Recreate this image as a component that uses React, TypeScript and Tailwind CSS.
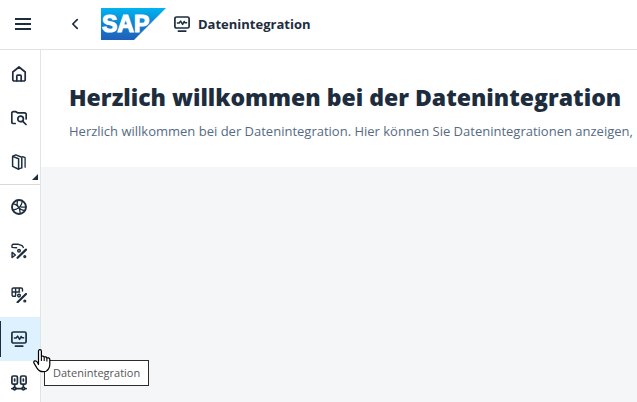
import type { ReactNode } from "react";
import clsx from "clsx";

interface IconProps {
    children: ReactNode;
}

function Icon({ children }: IconProps) {
    return (
        <svg
            className="w-4 h-4 shrink-0"
            viewBox="0 0 16 16"
            fill="none"
            stroke="currentColor"
            strokeWidth="1.7"
            strokeLinecap="round"
            strokeLinejoin="round"
            aria-hidden="true"
        >
            {children}
        </svg>
    );
}

const HomeIcon = () => (
    <Icon>
        <path d="M1.8 6 8 1l6.2 5v7.5a1.5 1.5 0 0 1-1.5 1.5H3.3a1.5 1.5 0 0 1-1.5-1.5z" />
        <path d="M5.8 15v-4.8a1 1 0 0 1 1-1h2.4a1 1 0 0 1 1 1V15" />
    </Icon>
);

const RepositoryIcon = () => (
    <Icon>
        <path d="M4.2 13.5H2.3A1.5 1.5 0 0 1 .8 12V3.2a1.5 1.5 0 0 1 1.5-1.5h2.6l1.6 1.1h7.2a1.5 1.5 0 0 1 1.5 1.5V9" />
        <circle cx="9.6" cy="8.9" r="2.8" />
        <path d="m11.6 11.1 3.4 3.4" />
    </Icon>
);

const CatalogIcon = () => (
    <Icon>
        <path d="M1.6 2.4 7.6 4.8v10.4l-6-2.8z" strokeWidth="1.5" />
        <path d="M1.8 2.2 4.8.9l6 2.4v10.6l-3 1" strokeWidth="1.5" />
        <path d="m11.6 2.6 2.5 1v9.6" strokeWidth="1.3" />
    </Icon>
);

const SemanticIcon = () => (
    <Icon>
        <circle cx="8" cy="8" r="7" strokeWidth="1.9" />
        <path d="M6.6 1.4C4.8 6.6 8 11 13.8 11.6M11.4 2.2C10.6 7.6 6.4 10.6 2 11M2.4 4.8c2 .2 4.4 1.6 6.2 5.2l.6 4.6M9.4 7.6c1.4.8 3.2.8 5.4.2" strokeWidth="1.3" />
    </Icon>
);

const DataBuilderIcon = () => (
    <Icon>
        <path d="M1 4.2V2.6c0-.8.5-1.3 1.3-1.3h5.2l3.6 1.3 1.2 1.8M1 4.4l4.6.4" strokeWidth="1.4" />
        <path d="M1.1 9.4 4.4 12l-3.3 2.5z" strokeWidth="1.5" />
        <path d="M15 6.6 6.6 14.8" strokeWidth="2.2" />
        <circle cx="8" cy="7.8" r="1.3" strokeWidth="1.5" />
        <circle cx="13.8" cy="13.6" r=".9" strokeWidth="1.4" />
    </Icon>
);

const BusinessBuilderIcon = () => (
    <Icon>
        <path d="M4.4 9.2H2.5C1.6 9.2 1.1 8.7 1.1 8V2.3c0-.8.5-1.3 1.4-1.3h7.7c.8 0 1.3.5 1.3 1.3v1.7M1.1 5h7.6M4.6 1v7.4M8.2 1v3" strokeWidth="1.4" />
        <path d="M15 7 6.6 15.2" strokeWidth="2.2" />
        <circle cx="8" cy="8.6" r="1.3" strokeWidth="1.5" />
        <circle cx="13.8" cy="14" r=".9" strokeWidth="1.4" />
    </Icon>
);

const IntegrationIcon = () => (
    <Icon>
        <rect x=".9" y="1" width="14.2" height="11" rx="1.6" />
        <path d="M4.4 15.1h7.4" />
        <path d="M3.4 7h1.8l1.4-1.9 2 3.3 1.5-2.9.9 1.3h1.6" strokeWidth="1.5" />
    </Icon>
);

const AccessIcon = () => (
    <Icon>
        <rect x=".9" y="1" width="5.5" height="8.2" rx="1.3" />
        <rect x="9.6" y="1" width="5.5" height="8.2" rx="1.3" />
        <path d="M3.65 4v2M12.35 4v2M3.65 9.8V12M12.35 9.8V12M.8 13.6h1.3M5.1 13.6h5.8M13.9 13.6h1.3" />
        <circle cx="3.65" cy="13.6" r="1.3" />
        <circle cx="12.35" cy="13.6" r="1.3" />
    </Icon>
);

function SapLogo() {
    return (
        <svg className="w-[65px] h-8" viewBox="0 0 65 32" role="img" aria-label="SAP">
            <defs>
                <linearGradient id="sap" x1="0" y1="0" x2="0" y2="1">
                    <stop offset="0" stopColor="#00b4f0" />
                    <stop offset=".5" stopColor="#0f83d2" />
                    <stop offset="1" stopColor="#2060b8" />
                </linearGradient>
            </defs>
            <path d="M0 0h65L33 32H0z" fill="url(#sap)" />
            <text
                x="1"
                y="24"
                fill="#fff"
                stroke="#fff"
                strokeWidth="1.2"
                fontFamily="Liberation Sans, sans-serif"
                fontWeight="700"
                fontSize="23"
            >
                SAP
            </text>
        </svg>
    );
}

function HandCursor() {
    return (
        <svg className="absolute left-[33px] top-8 z-20 w-[18px] h-6" viewBox="0 0 18 24" aria-hidden="true">
            <path
                d="M5.5 15.5V2.3C5.5 1.3 6 .7 6.9.7s1.5.6 1.5 1.6v5.2c.3-.7 2.6-.7 2.8.7.6-.6 2.5-.5 2.7.9.8-.6 2.9-.4 2.9 1.5v5.2c0 1.7-.5 2.8-1.2 3.9-1 1.9-2.7 3-5.4 3-3.2 0-4.8-1.4-6.2-3.6l-3-5c-.6-1-.1-1.9.7-2.2 1-.3 1.9.2 2.6 1.2z"
                fill="#fff"
                stroke="#000"
                strokeWidth="1.2"
                strokeLinejoin="round"
            />
            <path d="M8.4 7.5V12M11.2 8.2V12M13.9 9.3v3.2" stroke="#000" strokeWidth="1.1" fill="none" />
        </svg>
    );
}

interface NavItem {
    label: string;
    icon: ReactNode;
    active?: boolean;
    expandable?: boolean;
}

const mainItems: NavItem[] = [
    { label: "Startseite", icon: <HomeIcon /> },
    { label: "Repository-Explorer", icon: <RepositoryIcon /> },
    { label: "Katalog", icon: <CatalogIcon />, expandable: true },
];

const toolItems: NavItem[] = [
    { label: "Semantisches Onboarding", icon: <SemanticIcon /> },
    { label: "Data Builder", icon: <DataBuilderIcon /> },
    { label: "Business Builder", icon: <BusinessBuilderIcon /> },
    { label: "Datenintegration", icon: <IntegrationIcon />, active: true },
    { label: "Datenzugriffskontrollen", icon: <AccessIcon /> },
];

function NavList({ items }: { items: NavItem[] }) {
    return (
        <ul>
            {items.map((item) => (
                <li key={item.label} className="relative">
                    <button
                        type="button"
                        aria-label={item.label}
                        aria-current={item.active ? "page" : undefined}
                        className={clsx("flex h-11 w-full items-center justify-center pr-0.5", item.active && "bg-[#ddf1ff]")}
                    >
                        {item.icon}
                    </button>
                    {item.expandable && (
                        <svg className="absolute right-0.5 bottom-1 w-1.5 h-1.5" viewBox="0 0 6 6" aria-hidden="true">
                            <path d="M6 0v6H0z" fill="#1d2d3e" />
                        </svg>
                    )}
                    {item.active && (
                        <>
                            <span className="absolute left-0 top-1 bottom-1 w-px bg-[#1d2d3e]" />
                            <HandCursor />
                            <div
                                role="tooltip"
                                className="absolute left-11 top-[43px] z-10 border border-[#2b2b2b] bg-white px-2 py-1 font-['Open_Sans',sans-serif] text-[11px] leading-4 text-[#575757]"
                            >
                                {item.label}
                            </div>
                        </>
                    )}
                </li>
            ))}
        </ul>
    );
}

export default function App() {
    return (
        <div className="flex h-screen flex-col overflow-hidden bg-[#f5f6f7] font-['Open_Sans',sans-serif] text-[#1d2d3e]">
            <header className="flex h-[50px] shrink-0 items-center border-b border-[#e2e3e5] bg-white px-[15px] pb-px">
                <button type="button" aria-label="Menü" className="flex h-8 w-4 items-center">
                    <svg className="w-4 h-4" viewBox="0 0 16 16" aria-hidden="true">
                        <path d="M0 3h16M0 8h16M0 13h16" stroke="currentColor" strokeWidth="2" />
                    </svg>
                </button>
                <button type="button" aria-label="Zurück" className="ml-9 flex h-8 w-4 items-center">
                    <svg className="w-4 h-4" viewBox="0 0 16 16" aria-hidden="true">
                        <path d="M10.2 3.6 5.8 8l4.4 4.4" fill="none" stroke="currentColor" strokeWidth="1.7" strokeLinecap="round" strokeLinejoin="round" />
                    </svg>
                </button>
                <div className="ml-[18px]">
                    <SapLogo />
                </div>
                <div className="ml-2 flex items-center gap-2">
                    <IntegrationIcon />
                    <span className="text-[13px] leading-5 font-bold">Datenintegration</span>
                </div>
            </header>

            <div className="flex min-h-0 flex-1">
                <nav className="w-[41px] shrink-0 border-r border-[#e2e3e5] bg-white pt-0.5">
                    <NavList items={mainItems} />
                    <hr className="border-[#d9d9d9]" />
                    <NavList items={toolItems} />
                </nav>

                <main className="min-w-0 flex-1">
                    <section className="overflow-hidden bg-white pl-7 pt-[31px] pb-[26px] whitespace-nowrap">
                        <h1 className="text-[23px] leading-8 font-extrabold">Herzlich willkommen bei der Datenintegration</h1>
                        <p className="mt-2 text-[13px] leading-5 text-[#556b82]">
                            Herzlich willkommen bei der Datenintegration. Hier können Sie Datenintegrationen anzeigen,
                        </p>
                    </section>
                </main>
            </div>
        </div>
    );
}
